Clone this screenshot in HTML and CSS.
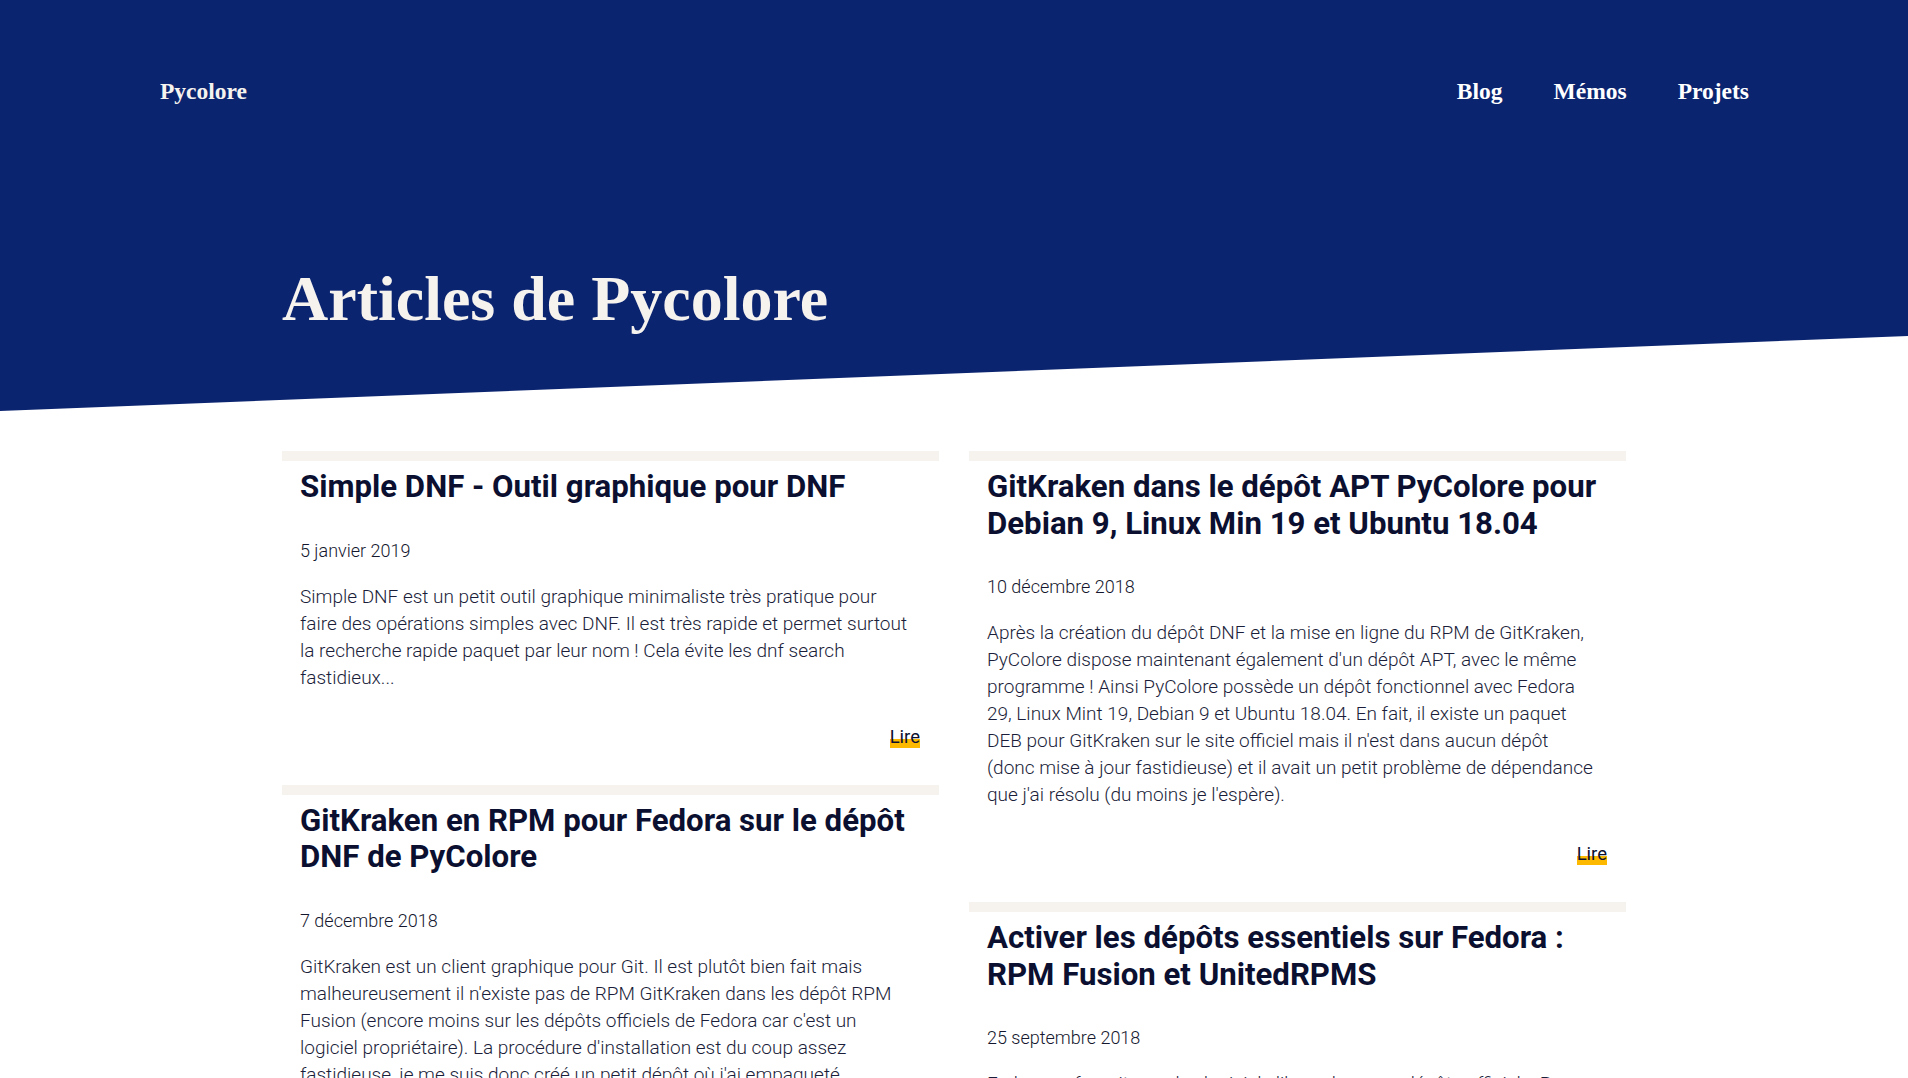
FILE: index.html
```html
<!DOCTYPE html>
<html lang="fr">
<head>
<meta charset="utf-8">
<title>Articles de Pycolore</title>
<link rel="stylesheet" href="styles.css">
</head>
<body>
<header class="hero">
  <nav class="topbar">
    <a class="brand" href="#">Pycolore</a>
    <ul class="menu">
      <li><a href="#">Blog</a></li>
      <li><a href="#">Mémos</a></li>
      <li><a href="#">Projets</a></li>
    </ul>
  </nav>
  <div class="container">
    <h1 class="page-title">Articles de Pycolore</h1>
  </div>
</header>

<main class="container posts">
  <div class="column">
    <article class="card">
      <h2 class="card-title">Simple DNF - Outil graphique pour DNF</h2>
      <p class="card-date">5 janvier 2019</p>
      <p class="card-text">Simple DNF est un petit outil graphique minimaliste très pratique pour faire des opérations simples avec DNF. Il est très rapide et permet surtout la recherche rapide paquet par leur nom ! Cela évite les dnf search fastidieux...</p>
      <div class="card-more"><a href="#">Lire</a></div>
    </article>
    <article class="card">
      <h2 class="card-title">GitKraken en RPM pour Fedora sur le dépôt DNF de PyColore</h2>
      <p class="card-date">7 décembre 2018</p>
      <p class="card-text">GitKraken est un client graphique pour Git. Il est plutôt bien fait mais malheureusement il n'existe pas de RPM GitKraken dans les dépôt RPM Fusion (encore moins sur les dépôts officiels de Fedora car c'est un logiciel propriétaire). La procédure d'installation est du coup assez fastidieuse, je me suis donc créé un petit dépôt où j'ai empaqueté GitKraken pour pouvoir l'installer et le mettre à jour facilement...</p>
      <div class="card-more"><a href="#">Lire</a></div>
    </article>
  </div>
  <div class="column">
    <article class="card">
      <h2 class="card-title">GitKraken dans le dépôt APT PyColore pour Debian 9, Linux Min 19 et Ubuntu 18.04</h2>
      <p class="card-date">10 décembre 2018</p>
      <p class="card-text">Après la création du dépôt DNF et la mise en ligne du RPM de GitKraken, PyColore dispose maintenant également d'un dépôt APT, avec le même programme ! Ainsi PyColore possède un dépôt fonctionnel avec Fedora 29, Linux Mint 19, Debian 9 et Ubuntu 18.04. En fait, il existe un paquet DEB pour GitKraken sur le site officiel mais il n'est dans aucun dépôt (donc mise à jour fastidieuse) et il avait un petit problème de dépendance que j'ai résolu (du moins je l'espère).</p>
      <div class="card-more"><a href="#">Lire</a></div>
    </article>
    <article class="card">
      <h2 class="card-title">Activer les dépôts essentiels sur Fedora : RPM Fusion et UnitedRPMS</h2>
      <p class="card-date">25 septembre 2018</p>
      <p class="card-text">Fedora ne fournit que des logiciels libres dans ses dépôts officiels. Pour profiter des codecs multimédia et de certains logiciels propriétaires, il faut activer les dépôts RPM Fusion et UnitedRPMS...</p>
      <div class="card-more"><a href="#">Lire</a></div>
    </article>
  </div>
</main>
</body>
</html>
```

FILE: styles.css
```css
* { box-sizing: border-box; }

html, body {
  margin: 0;
  padding: 0;
  background: #ffffff;
}

body {
  font-family: Roboto, "Liberation Sans", sans-serif;
  color: #1b1e3a;
}

a { text-decoration: none; color: inherit; }

.hero {
  background: #0b2470;
  height: 411px;
  padding-top: 72px;
  clip-path: polygon(0 0, 100% 0, 100% 336px, 0 411px);
  color: #f6f3ef;
}

.topbar {
  display: flex;
  justify-content: space-between;
  align-items: center;
  padding: 0 159px 0 160px;
  height: 38px;
  font-family: "Liberation Serif", serif;
  font-weight: 700;
  font-size: 23.5px;
}

.brand { color: #f6f3ef; }

.menu {
  display: flex;
  gap: 51px;
  list-style: none;
  margin: 0;
  padding: 0;
}

.menu a { color: #ffffff; }

.container {
  width: 1344px;
  margin: 0 auto;
}

.page-title {
  margin: 150px 0 0;
  font-family: "Liberation Serif", serif;
  font-weight: 700;
  font-size: 64px;
  line-height: 77px;
  color: #f6f3ef;
}

.posts {
  display: flex;
  gap: 30px;
  padding-top: 40px;
  align-items: flex-start;
}

.column {
  flex: 1 1 0;
  display: flex;
  flex-direction: column;
}

.card {
  border-top: 10px solid #f6f3ef;
  padding: 0 18px;
  margin-bottom: 37px;
}

.card-title {
  margin: 8px 0 0;
  padding-right: 10px;
  font-family: Roboto, "Liberation Sans", sans-serif;
  font-weight: 700;
  font-size: 31.2px;
  line-height: 36.5px;
  color: #0b0f30;
}

.card-date {
  margin: 31px 0 0;
  font-weight: 300;
  font-size: 18px;
  line-height: 27px;
  color: #14172e;
}

.card-text {
  margin: 19px 0 0;
  padding-right: 10px;
  font-weight: 300;
  font-size: 19px;
  line-height: 27px;
  color: #1b1e3a;
}

.card-more {
  margin-top: 30px;
  height: 27px;
  display: flex;
  justify-content: flex-end;
  align-items: flex-end;
  padding-right: 1px;
}

.card-more a {
  display: inline-block;
  font-size: 18.5px;
  line-height: 18px;
  padding-bottom: 2px;
  color: #0b0f30;
  background: linear-gradient(to bottom, transparent 11px, #fcb900 11px);
}
```
